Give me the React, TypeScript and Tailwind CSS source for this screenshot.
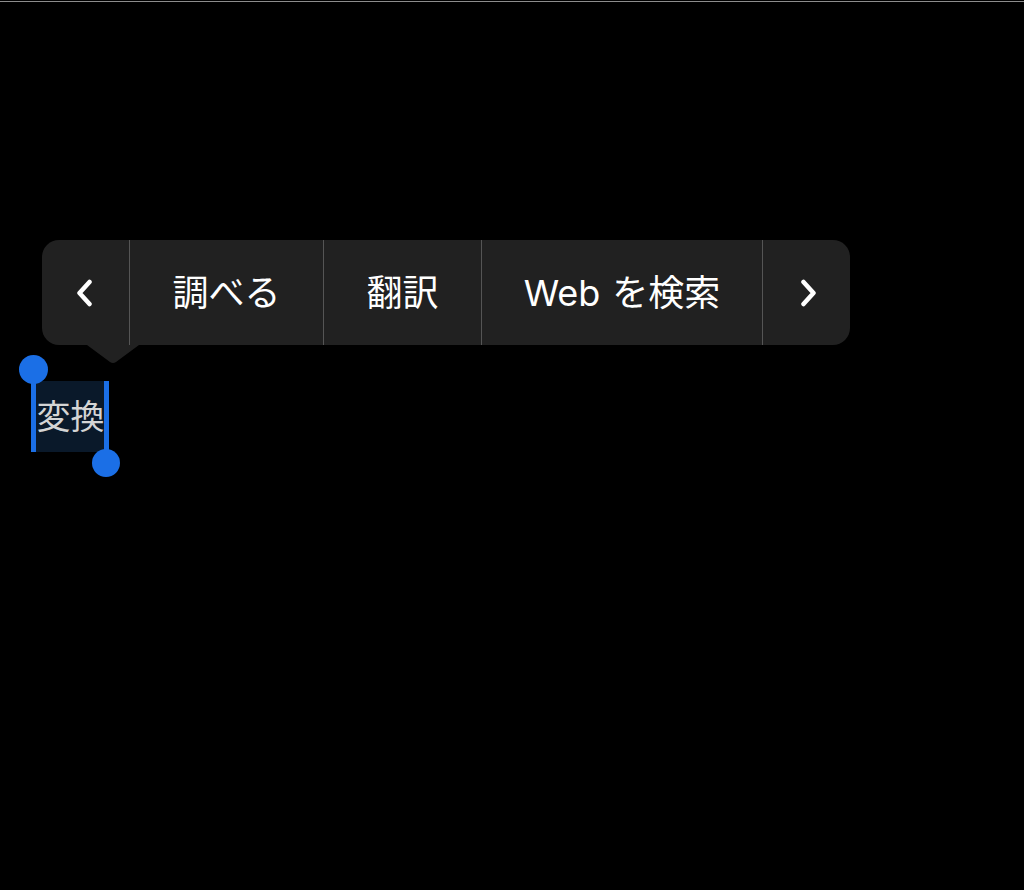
const jp = { fontFamily: '"Inter", "Noto Sans CJK JP", sans-serif' };

function Chevron({ dir }: { dir: "left" | "right" }) {
  const d = dir === "left" ? "M13.5 3 L3.5 14 L13.5 25" : "M2.5 3 L12.5 14 L2.5 25";
  return (
    <svg width="16" height="28" viewBox="0 0 16 28" fill="none">
      <path d={d} stroke="white" strokeWidth="4.5" strokeLinecap="round" strokeLinejoin="round" />
    </svg>
  );
}

function Segment({ w, children, last }: { w: string; children: React.ReactNode; last?: boolean }) {
  return (
    <div
      className={`${w} h-full flex items-center justify-center text-white text-[36px] whitespace-nowrap ${
        last ? "" : "border-r border-[#555555]"
      }`}
    >
      {children}
    </div>
  );
}

export default function App() {
  return (
    <div className="h-[890px] w-[1024px] bg-black overflow-hidden" style={jp}>
      <div className="h-px" />
      <div className="h-px bg-[#8c8c8c]" />

      <div className="pt-[238px] pl-[42px]">
        <div className="relative w-[808px]">
          <div className="h-[105px] bg-[#212121] rounded-[17px] flex">
            <Segment w="w-[88px]">
              <span className="-ml-[4px] flex">
                <Chevron dir="left" />
              </span>
            </Segment>
            <Segment w="w-[194px]">調べる</Segment>
            <Segment w="w-[158px]">翻訳</Segment>
            <Segment w="w-[281px]">
              <span>
                Web<span className="ml-[12px]">を検索</span>
              </span>
            </Segment>
            <Segment w="flex-1" last>
              <span className="ml-[4px] flex">
                <Chevron dir="right" />
              </span>
            </Segment>
          </div>
          <svg
            className="absolute left-[45px] top-[105px]"
            width="52"
            height="19"
            viewBox="0 0 52 19"
          >
            <path d="M0 0 L52 0 L29 17 Q26 19 23 17 Z" fill="#212121" />
          </svg>
        </div>
      </div>

      <div className="mt-[36px] ml-[36px] relative w-[69px] h-[71px]">
        <div className="w-full h-full bg-[#0a192a] flex items-center justify-center whitespace-nowrap text-[34px] leading-none text-[#d4d4d4]">
          変換
        </div>
        <div className="absolute left-[-5px] top-[-12px] w-[5px] h-[83px] bg-[#1b6fe6]" />
        <div className="absolute left-[-17px] top-[-26px] w-[29px] h-[29px] rounded-full bg-[#1b6fe6]" />
        <div className="absolute left-[68px] top-0 w-[5px] h-[82px] bg-[#1b6fe6]" />
        <div className="absolute left-[56px] top-[68px] w-[28px] h-[28px] rounded-full bg-[#1b6fe6]" />
      </div>
    </div>
  );
}
